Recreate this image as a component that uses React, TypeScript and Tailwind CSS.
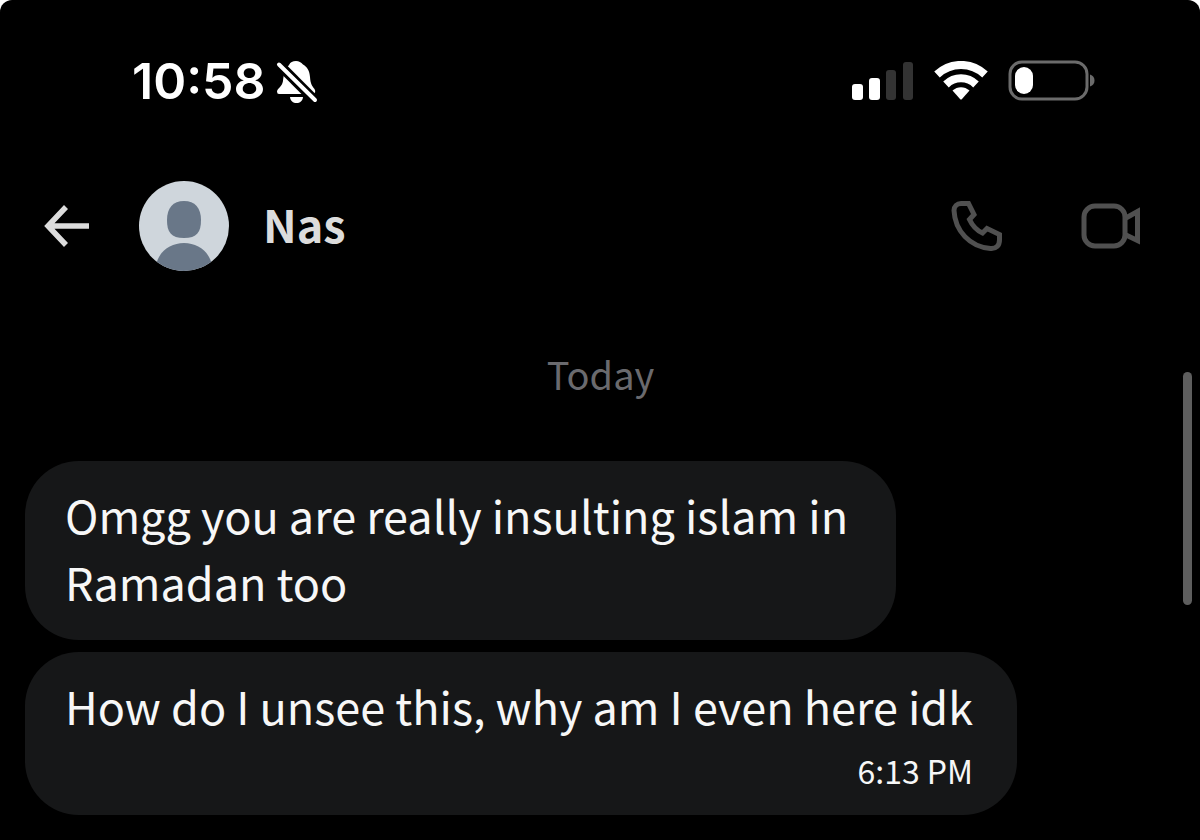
import React from "react";

type Message = {
  id: number;
  text: string;
  time?: string;
  width: string;
};

const messages: Message[] = [
  {
    id: 1,
    text: "Omgg you are really insulting islam in Ramadan too",
    width: "max-w-[871px]",
  },
  {
    id: 2,
    text: "How do I unsee this, why am I even here idk",
    time: "6:13 PM",
    width: "max-w-5xl",
  },
];

const BellOffIcon = () => (
  <svg width="42" height="48" viewBox="0 0 42 48" aria-hidden="true">
    <path
      d="M13 8C14.500 5 16.500 4 20 4C23 4 25 5.500 27 7.500C31.500 10 33.500 14 34 20C34.500 27 36 29 38.500 32Q40.500 36 37 37H3Q1 37 1 34.500C1.500 31 6 30 7 24C7.800 18 8 13 13 8Z"
      fill="#fff"
    />
    <path d="M14 40H27C26.500 44 24 46 20.500 46C17 46 14.500 44 14 40Z" fill="#fff" />
    <path d="M-1 3.500L42 46.500" stroke="#000" strokeWidth="10" />
    <path d="M3 7.500L39 43" stroke="#fff" strokeWidth="4" strokeLinecap="round" />
  </svg>
);

const SignalIcon = () => (
  <svg width="62" height="40" viewBox="0 0 62 40" aria-hidden="true">
    <rect x="0" y="23" width="11" height="16" rx="3" fill="#fff" />
    <rect x="17" y="17" width="11" height="22" rx="3" fill="#fff" />
    <rect x="34" y="9" width="10" height="30" rx="3" fill="#333" />
    <rect x="51" y="1" width="10" height="38" rx="3" fill="#333" />
  </svg>
);

const WifiIcon = () => (
  <svg width="54" height="40" viewBox="0 0 54 40" aria-hidden="true">
    <g fill="none" stroke="#fff" strokeWidth="8">
      <path d="M3 13.500C16.500 0.700 37.500 0.700 51 13.500" />
      <path d="M12 23.500C20.500 15.300 33.500 15.300 42 23.500" />
    </g>
    <path d="M18.500 29.500C23.500 25 30.500 25 35.500 29.500L28 38Q27 39 26 38Z" fill="#fff" />
  </svg>
);

const BatteryIcon = () => (
  <svg width="88" height="42" viewBox="0 0 88 42" aria-hidden="true">
    <rect x="2" y="2" width="77" height="37" rx="12" fill="none" stroke="#6b6b6b" strokeWidth="3" />
    <rect x="7" y="7" width="18" height="27" rx="9" fill="#fff" />
    <path d="M82 14.500C88 16 88 25 82 26.500Z" fill="#6b6b6b" />
  </svg>
);

const BackIcon = () => (
  <svg width="46" height="44" viewBox="0 0 46 44" aria-hidden="true">
    <path
      d="M22 3L4 22L22 41M4 22H45"
      fill="none"
      stroke="#dcdcdc"
      strokeWidth="5.500"
    />
  </svg>
);

const Avatar = () => (
  <svg className="rounded-full" width="90" height="90" viewBox="0 0 90 90" aria-hidden="true">
    <rect width="90" height="90" fill="#cfd6dc" />
    <path
      d="M45 20C56 20 62 27 62 39C62 51 58 57 45 57C32 57 28 51 28 39C28 27 34 20 45 20Z"
      fill="#697788"
    />
    <path d="M17 85C19 71 31 62 45 62C59 62 71 71 73 85V90H17Z" fill="#697788" />
  </svg>
);

const PhoneIcon = () => (
  <svg width="52" height="52" viewBox="0 0 52 52" aria-hidden="true">
    <path
      d="M10 3.500H17.500L23 14.500L18.500 19.500C21.500 26 26 30.500 31.500 33L36 28.500L48.500 34.500V40C48.500 45.500 45 49 39.500 48.500C19 47 4 31 3 10.500C3 6.500 6 3.500 10 3.500Z"
      fill="none"
      stroke="#505050"
      strokeWidth="5"
    />
  </svg>
);

const VideoIcon = () => (
  <svg width="60" height="46" viewBox="0 0 60 46" aria-hidden="true">
    <g fill="none" stroke="#505050" strokeWidth="5">
      <rect x="3" y="3" width="41" height="40" rx="11" />
      <path d="M44 15.500L56.500 8.500V37.500L44 31.500" />
    </g>
  </svg>
);

const StatusBar = () => (
  <div className="flex items-center justify-between pt-[54px] pl-[132px] pr-[104px]">
    <div className="flex items-center gap-2.5">
      <span className="font-['Inter'] text-[50px] leading-[54px] font-semibold">10:58</span>
      <BellOffIcon />
    </div>
    <div className="flex items-center gap-5">
      <SignalIcon />
      <WifiIcon />
      <BatteryIcon />
    </div>
  </div>
);

const ChatHeader = () => (
  <header className="flex items-center justify-between pt-[73px] pl-11 pr-[59px]">
    <div className="flex items-center">
      <button type="button" aria-label="Back">
        <BackIcon />
      </button>
      <div className="ml-[49px] flex items-center gap-[34px]">
        <Avatar />
        <h1 className="pb-1 text-[45px] leading-[52px] font-bold text-[#dcdcdc]">Nas</h1>
      </div>
    </div>
    <div className="flex items-center gap-[78px]">
      <button type="button" aria-label="Call">
        <PhoneIcon />
      </button>
      <button type="button" aria-label="Video call">
        <VideoIcon />
      </button>
    </div>
  </header>
);

const Bubble = ({ message }: { message: Message }) => (
  <li
    className={`w-fit rounded-[54px] bg-[#161718] pt-5 pr-11 pb-[25px] pl-10 text-[#f7f7f7] ${message.width}`}
  >
    <p className="text-[45px] leading-[67px]">{message.text}</p>
    {message.time && (
      <time className="block pt-3 text-right text-[32px] leading-[39px]">
        {message.time}
      </time>
    )}
  </li>
);

const App = () => {
  return (
    <div className="relative min-h-screen rounded-t-xl bg-black font-['Noto_Sans_CJK_SC','Noto_Sans',sans-serif] text-white">
      <StatusBar />
      <ChatHeader />
      <main className="pt-[73px] pl-[25px] pr-6 pb-6">
        <p className="text-center text-[38px] leading-[60px] text-[#6a6a6e]">Today</p>
        <ul className="mt-[57px] flex flex-col gap-3">
          {messages.map((message) => (
            <Bubble key={message.id} message={message} />
          ))}
        </ul>
      </main>
      {/* scroll thumb floats over the conversation */}
      <div className="absolute top-[372px] right-2 h-[233px] w-[9px] rounded-full bg-[#5e5e5e]" />
    </div>
  );
};

export default App;
